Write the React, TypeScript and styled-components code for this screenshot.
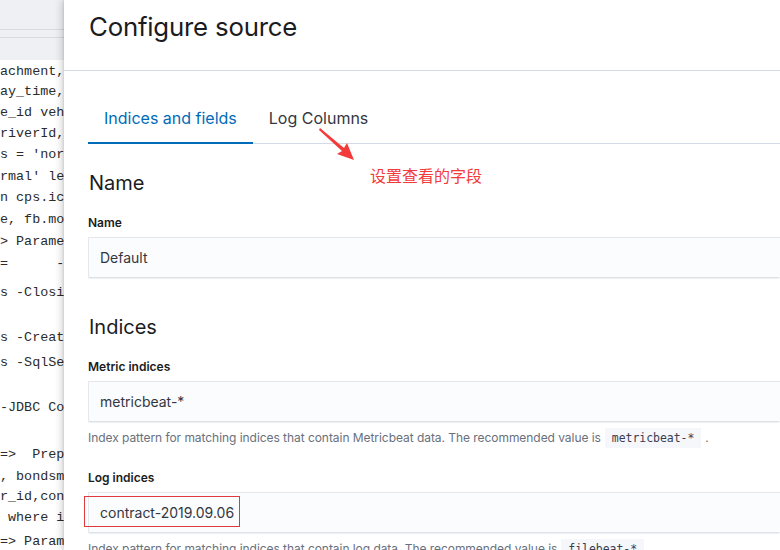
import React from "react";
import styled, { createGlobalStyle } from "styled-components";

const Global = createGlobalStyle`
  html, body { margin: 0; padding: 0; width: 780px; height: 550px; overflow: hidden; background: #fff; }
  #root { width: 780px; height: 550px; }
`;

const Page = styled.div`
  display: flex;
  width: 780px;
  height: 550px;
  overflow: hidden;
  position: relative;
`;

const Backdrop = styled.div`
  width: 64px;
  flex: none;
  display: flex;
  flex-direction: column;
  overflow: hidden;
  background: #fff;
`;

const BackTop = styled.div`
  height: 60px;
  flex: none;
  background: #eef0f3;
  display: flex;
  flex-direction: column;
  padding-top: 29px;
  box-sizing: border-box;
  gap: 7px;
`;

const BackRule = styled.div`
  height: 1px;
  background: #d8dbe0;
`;

const Code = styled.div`
  display: flex;
  flex-direction: column;
  padding-top: 2px;
  flex: none;
`;

const CodeLine = styled.div<{ $h: number }>`
  height: ${(p) => p.$h}px;
  flex: none;
  line-height: 20px;
  font-family: "Liberation Mono", "DejaVu Sans Mono", monospace;
  font-size: 13.4px;
  color: #2b2b2b;
  white-space: pre;
  overflow: hidden;
`;

const Flyout = styled.div`
  flex: 1;
  min-width: 0;
  background: #fff;
  box-shadow: -2px 0 8px rgba(0, 0, 0, 0.18), -1px 0 2px rgba(0, 0, 0, 0.08);
  display: flex;
  flex-direction: column;
  font-family: Inter, "Noto Sans", sans-serif;
  z-index: 1;
  overflow: hidden;
`;

const Header = styled.div`
  height: 71px;
  flex: none;
  box-sizing: border-box;
  border-bottom: 1px solid #d3dae6;
  padding: 8px 24px 0 25px;
`;

const Title = styled.h2`
  margin: 0;
  font-size: 25.8px;
  font-weight: 400;
  line-height: 38px;
  color: #1a1c21;
  letter-spacing: -0.2px;
`;

const Body = styled.div`
  flex: none;
  padding: 24px 0 0 24px;
  display: flex;
  flex-direction: column;
`;

const Tabs = styled.div`
  display: flex;
  height: 48px;
  flex: none;
  border-bottom: 1px solid #d3dae6;
  margin-bottom: 25px;
`;

const Tab = styled.div<{ $active?: boolean }>`
  padding: 0 16px 4px;
  display: flex;
  align-items: center;
  font-size: 16px;
  color: ${(p) => (p.$active ? "#006bb8" : "#343741")};
  box-shadow: ${(p) => (p.$active ? "inset 0 -2px 0 #006bb8" : "none")};
  margin-bottom: -1px;
`;

const SectionTitle = styled.h3`
  margin: 0 0 18px 1px;
  font-size: 20px;
  font-weight: 400;
  line-height: 28px;
  color: #1a1c21;
`;

const Label = styled.div`
  font-size: 12px;
  font-weight: 600;
  color: #1a1c21;
  line-height: 16px;
  margin-bottom: 6px;
`;

const InputWrap = styled.div`
  position: relative;
`;

const Input = styled.div`
  height: 40px;
  box-sizing: border-box;
  background: #fbfcfd;
  border-top: 1px solid #e4e7ec;
  border-left: 1px solid #e4e7ec;
  box-shadow: 0 2px 0 -0.5px #dfe2e7;
  display: flex;
  align-items: center;
  padding-left: 11px;
  font-size: 14px;
  color: #343741;
`;

const Highlight = styled.div`
  position: absolute;
  left: -4px;
  top: 4px;
  width: 156px;
  height: 31px;
  box-sizing: border-box;
  border: 1px solid #e0393e;
`;

const Help = styled.div`
  font-size: 12px;
  color: #69707d;
  line-height: 18px;
  margin-top: 8px;
  white-space: nowrap;
  letter-spacing: -0.05px;
`;

const Chip = styled.code`
  font-family: "DejaVu Sans Mono", "Liberation Mono", monospace;
  font-size: 11.5px;
  background: #f5f7fa;
  color: #3b3d52;
  padding: 3px 7px;
  margin: 0 4px;
`;

const Field = styled.div<{ $mb: number }>`
  display: flex;
  flex-direction: column;
  margin-bottom: ${(p) => p.$mb}px;
`;

const Note = styled.div`
  position: absolute;
  left: 316px;
  top: 126px;
  display: flex;
  align-items: flex-end;
  pointer-events: none;
  z-index: 2;
`;

const NoteText = styled.span`
  font-family: "Noto Sans CJK SC", sans-serif;
  font-size: 16px;
  color: #f43b3b;
  margin-left: 14px;
  line-height: 20px;
  margin-bottom: -23px;
`;

const codeLines: [string, number][] = [
  ["achment,", 20],
  ["ay_time,", 21],
  ["e_id veh", 21],
  ["riverId,", 21],
  ["s = 'nor", 22],
  ["rmal' lef", 21],
  ["n cps.ic", 22],
  ["e, fb.mo", 22],
  ["> Parame", 22],
  ["=      -", 29],
  ["s -Closi", 22],
  ["", 23],
  ["s -Creat", 25],
  ["s -SqlSe", 22],
  ["", 23],
  ["-JDBC Co", 23],
  ["", 24],
  ["=>  Prep", 22],
  [", bondsm", 20],
  ["r_id,con", 21],
  [" where i", 24],
  ["=> Param", 22],
];

export default function App() {
  return (
    <>
      <Global />
      <Page>
        <Backdrop>
          <BackTop>
            <BackRule />
            <BackRule />
          </BackTop>
          <Code>
            {codeLines.map(([t, h], i) => (
              <CodeLine key={i} $h={h}>
                {t}
              </CodeLine>
            ))}
          </Code>
        </Backdrop>
        <Flyout>
          <Header>
            <Title>Configure source</Title>
          </Header>
          <Body>
            <Tabs>
              <Tab $active>Indices and fields</Tab>
              <Tab>Log Columns</Tab>
            </Tabs>
            <SectionTitle>Name</SectionTitle>
            <Field $mb={36}>
              <Label>Name</Label>
              <Input>Default</Input>
            </Field>
            <SectionTitle>Indices</SectionTitle>
            <Field $mb={23}>
              <Label>Metric indices</Label>
              <Input>metricbeat-*</Input>
              <Help>
                Index pattern for matching indices that contain Metricbeat data. The recommended value is
                <Chip>metricbeat-*</Chip>.
              </Help>
            </Field>
            <Field $mb={0}>
              <Label>Log indices</Label>
              <InputWrap>
                <Input>contract-2019.09.06</Input>
                <Highlight />
              </InputWrap>
              <Help>
                Index pattern for matching indices that contain log data. The recommended value is
                <Chip>filebeat-*</Chip>.
              </Help>
            </Field>
          </Body>
        </Flyout>
        <Note>
          <svg width="40" height="36" viewBox="0 0 40 36">
            <path d="M4 2 L28 22 L31 17 L38 34 L21 28 L26 25 L3 4 Z" fill="#f43b3b" />
          </svg>
          <NoteText>设置查看的字段</NoteText>
        </Note>
      </Page>
    </>
  );
}
